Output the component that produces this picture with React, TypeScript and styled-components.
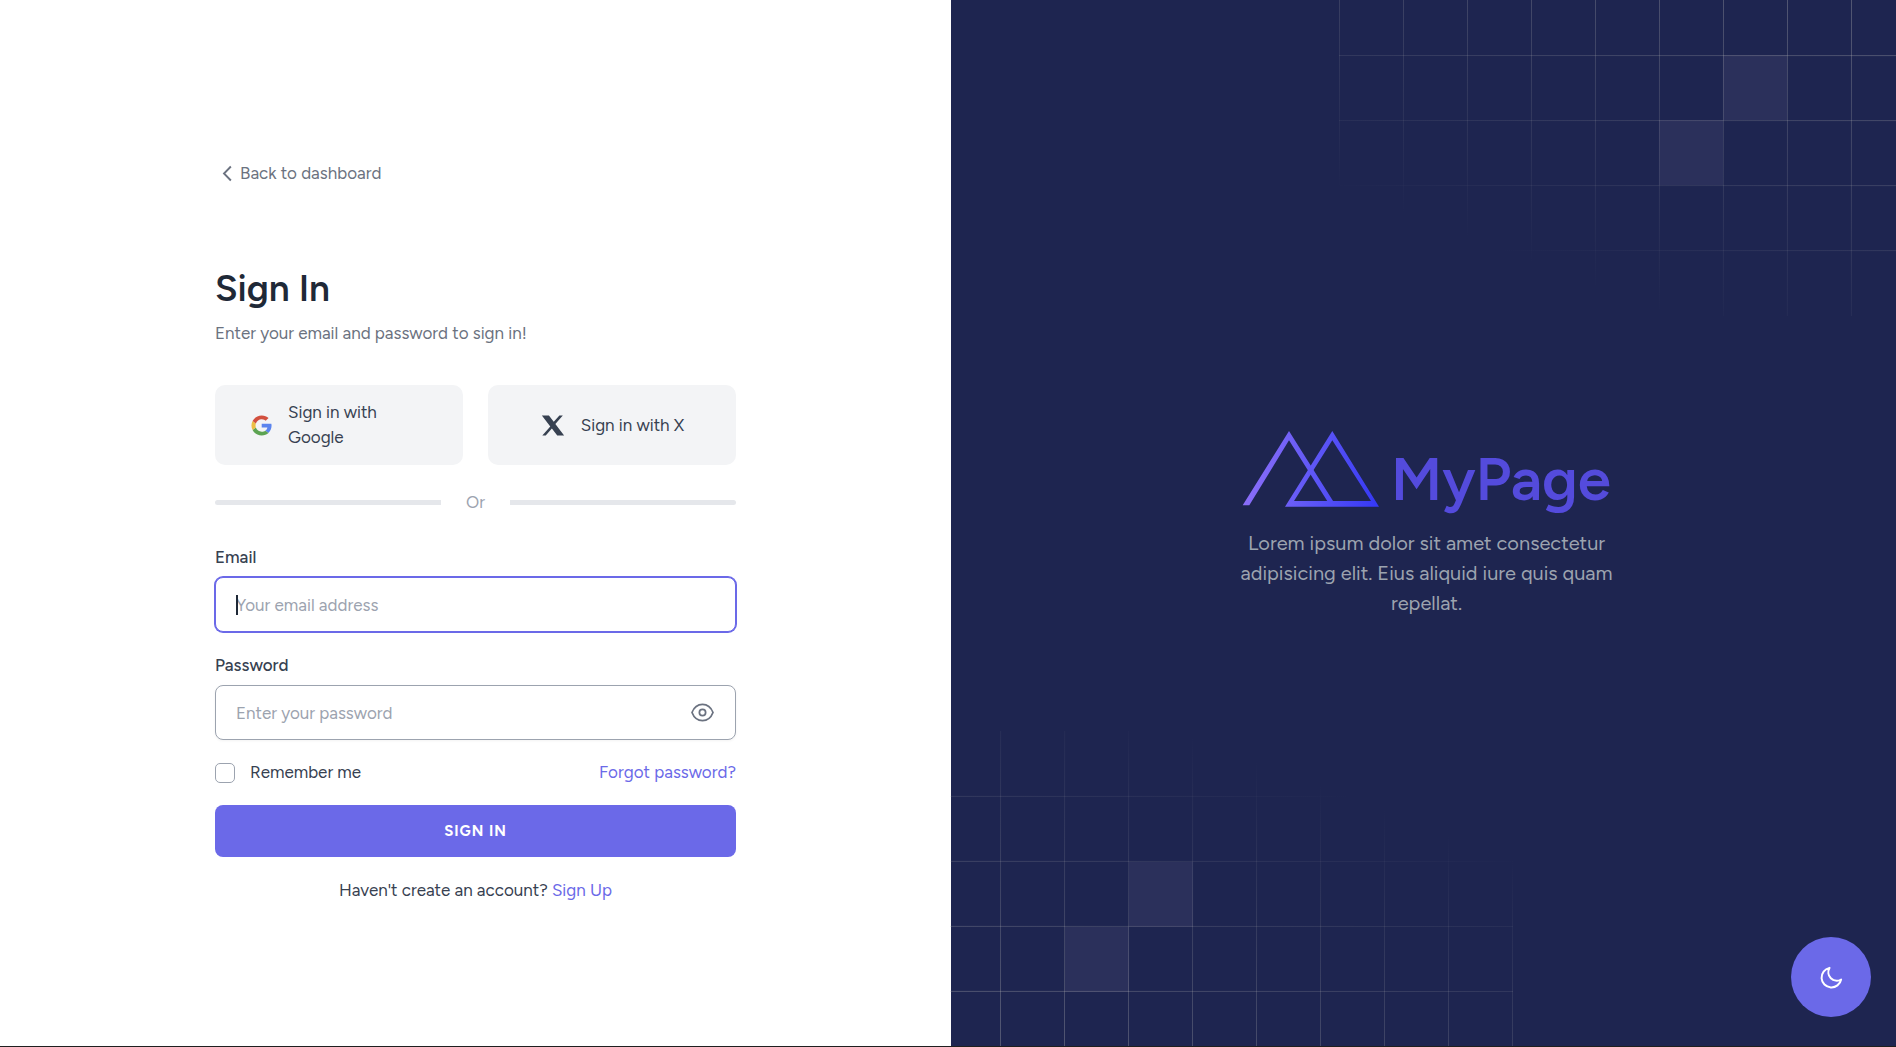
import React from "react";
import styled, { createGlobalStyle } from "styled-components";

const brand = "#6b69e8";

const Global = createGlobalStyle`
  *, *::before, *::after { box-sizing: border-box; }
  body { margin: 0; background: #1f1f1f; font-family: Figtree, Lato, "Open Sans", sans-serif; font-size: 17px; line-height: 25px; color: #374151; }
  h1, p { margin: 0; }
  button, input { font: inherit; color: inherit; }
  a { color: ${brand}; text-decoration: none; }
`;

const Page = styled.main`
  display: flex;
  min-height: calc(100vh - 1px);
  overflow: hidden;
`;

const Panel = styled.section`
  flex: 0 0 calc(50% + 3px);
  display: flex;
  flex-direction: column;
  align-items: center;
`;

const FormPanel = styled(Panel)`
  background: #fff;
  padding: 161px 24px 0;
`;

const BrandPanel = styled(Panel)`
  position: relative;
  justify-content: center;
  background: #1e2550;
`;

const Column = styled.div`
  width: 100%;
  max-width: 521px;
  display: flex;
  flex-direction: column;
`;

const BackLink = styled.a`
  display: flex;
  align-items: center;
  align-self: flex-start;
  color: #6b7280;
  margin-bottom: 74px;
`;

const Title = styled.h1`
  font-size: 37px;
  line-height: 56px;
  font-weight: 600;
  color: #1f2937;
  margin-bottom: 5px;
`;

const Subtitle = styled.p`
  color: #6b7280;
  margin-bottom: 39px;
`;

const SocialRow = styled.div`
  display: grid;
  grid-template-columns: 1fr 1fr;
  gap: 25px;
`;

const SocialButton = styled.button`
  display: flex;
  align-items: center;
  justify-content: center;
  gap: 15px;
  min-height: 80px;
  padding: 15px 35px;
  border: 0;
  border-radius: 10px;
  background: #f3f4f6;
  text-align: left;
  svg { flex: none; }
`;

const Divider = styled.div`
  display: flex;
  align-items: center;
  gap: 25px;
  margin: 25px 0 30px;
  color: #9ca3af;
  &::before, &::after { content: ""; flex: 1; height: 5px; background: #e5e7eb; }
  &::before { border-radius: 3px 0 0 3px; }
  &::after { border-radius: 0 3px 3px 0; }
`;

const Fields = styled.div`
  display: flex;
  flex-direction: column;
  gap: 21px;
  margin-bottom: 20px;
`;

const Field = styled.div`
  display: flex;
  flex-direction: column;
  gap: 7px;
`;

const Label = styled.label`
  font-weight: 500;
`;

const InputWrap = styled.div`
  position: relative;
  display: flex;
`;

const Input = styled.input<{ $trailing?: boolean }>`
  width: 100%;
  height: 55px;
  padding: 0 ${p => (p.$trailing ? 60 : 20)}px 0 20px;
  border: 1px solid #9ca3af;
  border-radius: 8px;
  background: #fff;
  box-shadow: 0 1px 3px rgba(0, 0, 0, 0.05);
  outline: none;
  &::placeholder { color: #9ca3af; opacity: 1; }
  &:focus { border-color: ${brand}; box-shadow: 0 0 0 1px ${brand}; }
`;

const Caret = styled.span`
  display: none;
  position: absolute;
  left: 21px;
  top: 18px;
  width: 2px;
  height: 20px;
  background: #1f2937;
  pointer-events: none;
  input:focus:placeholder-shown + & { display: block; }
`;

const EyeButton = styled.button`
  position: absolute;
  right: 21px;
  top: 0;
  bottom: 0;
  display: flex;
  align-items: center;
  padding: 0;
  border: 0;
  background: none;
  color: #6b7280;
`;

const Options = styled.div`
  display: flex;
  align-items: center;
  justify-content: space-between;
  margin-bottom: 20px;
`;

const Remember = styled.label`
  display: flex;
  align-items: center;
  gap: 15px;
`;

const Checkbox = styled.input`
  appearance: none;
  width: 20px;
  height: 20px;
  margin: 0;
  border: 1px solid #9ca3af;
  border-radius: 5px;
  background: #fff;
  &:checked { background: ${brand}; border-color: ${brand}; }
`;

const Submit = styled.button`
  height: 52px;
  border: 0;
  border-radius: 8px;
  background: ${brand};
  color: #fff;
  font-size: 15px;
  font-weight: 700;
  letter-spacing: 1px;
  text-transform: uppercase;
  margin-bottom: 21px;
`;

const Footnote = styled.p`
  text-align: center;
`;

const GridArt = styled.svg<{ $corner: "top" | "bottom" }>`
  position: absolute;
  width: 563px;
  height: 317px;
  ${p => (p.$corner === "top" ? "top: 0; right: 0;" : "bottom: -1px; left: -1px; transform: rotate(180deg);")}
`;

const Brand = styled.div`
  position: relative;
  width: 400px;
  display: flex;
  flex-direction: column;
  align-items: center;
  padding-top: 2px;
`;

const Logo = styled.div`
  display: flex;
  align-items: flex-start;
  gap: 11px;
  font-size: 60px;
  line-height: 98px;
  font-weight: 600;
  color: #544bdc;
`;

const Tagline = styled.p`
  font-size: 20px;
  line-height: 30px;
  text-align: center;
  color: #9ca3af;
`;

const ThemeToggle = styled.button`
  position: fixed;
  right: 25px;
  bottom: 30px;
  width: 80px;
  height: 80px;
  display: flex;
  align-items: center;
  justify-content: center;
  border: 0;
  border-radius: 50%;
  background: ${brand};
  color: #fff;
`;

function Grid({ corner }: { corner: "top" | "bottom" }) {
  const id = `fade-${corner}`;
  return (
    <GridArt $corner={corner} viewBox="0 0 563 317" aria-hidden="true">
      <defs>
        <linearGradient id={id} gradientUnits="userSpaceOnUse" x1="330" y1="-40" x2="210" y2="270">
          <stop offset="0" stopColor="#b2b2b2" stopOpacity="0.34" />
          <stop offset="1" stopColor="#b2b2b2" stopOpacity="0" />
        </linearGradient>
      </defs>
      <g stroke={`url(#${id})`}>
        {[0, 1, 2, 3, 4, 5, 6, 7, 8].map(i => (
          <path key={i} d={`M${i * 64 + 0.5} 0L${i * 64 + 0.4} 316`} />
        ))}
        {[55.5, 120.5, 185.5, 250.5].map(y => (
          <path key={y} d={`M0 ${y}L563 ${y + 0.1}`} />
        ))}
      </g>
      <path d="M384 55h64v65h-64zM320 120h64v65h-64z" fill="#bcacd0" fillOpacity="0.085" />
    </GridArt>
  );
}

const ChevronIcon = () => (
  <svg width="25" height="25" viewBox="0 0 20 20" fill="none" stroke="currentColor" strokeWidth="1.5" aria-hidden="true">
    <path d="M12.7 4.4 7.200 10l5.500 5.600" />
  </svg>
);

const GoogleIcon = () => (
  <svg width="23" height="23" viewBox="0 0 20 20" aria-hidden="true">
    <path d="M18.75 10.19c0-.72-.06-1.25-.19-1.79h-8.38v3.25h4.92c-.1.81-.63 2.02-1.83 2.84l2.63 2.08c1.78-1.61 2.85-3.98 2.85-6.38z" fill="#5b84ee" />
    <path d="M10.18 18.75c2.41 0 4.43-.78 5.91-2.12l-2.82-2.14c-.75.52-1.77.88-3.09.88-2.36 0-4.36-1.53-5.08-3.63l-2.86 2.17c1.47 2.86 4.47 4.84 7.94 4.84z" fill="#5ca352" />
    <path d="M5.1 11.73A5.41 5.41 0 0 1 4.8 10c0-.6.11-1.19.29-1.73L2.2 6.07A8.8 8.8 0 0 0 1.25 10c0 1.41.34 2.74.95 3.93z" fill="#ecbf45" />
    <path d="M10.18 4.63c1.68 0 2.81.71 3.45 1.3l2.52-2.41C14.6 2.12 12.59 1.25 10.18 1.25 6.71 1.25 3.71 3.2 2.24 6.07l2.88 2.2c.73-2.11 2.7-3.64 5.06-3.64z" fill="#d2503f" />
  </svg>
);

const XIcon = () => (
  <svg width="26" height="25" viewBox="0 0 21 20" fill="currentColor" aria-hidden="true">
    <path d="M15.67 1.88h2.76L12.4 8.76l7.09 9.37h-5.55l-4.35-5.68-4.97 5.68H1.86l6.44-7.36L1.5 1.88h5.69l3.93 5.19z" />
  </svg>
);

const EyeIcon = () => (
  <svg width="25" height="25" viewBox="0 0 20 20" fill="none" stroke="currentColor" strokeWidth="1.4" aria-hidden="true">
    <path d="M1.6 10C3.1 6.1 6.3 3.5 10 3.5s6.900 2.600 8.400 6.500c-1.500 3.900-4.700 6.500-8.400 6.500S3.100 13.900 1.600 10z" />
    <circle cx="10" cy="10" r="2.500" />
  </svg>
);

const MoonIcon = () => (
  <svg width="25" height="25" viewBox="0 0 20 20" fill="none" stroke="currentColor" strokeWidth="1.6" strokeLinejoin="round" aria-hidden="true">
    <path d="M8.400 2.300A7.900 7.900 0 1 0 17.700 11.600 6.800 6.800 0 0 1 8.400 2.300z" />
  </svg>
);

const Mountains = () => (
  <svg width="138" height="78" viewBox="0 0 138 78" fillRule="evenodd" aria-hidden="true">
    <defs>
      <linearGradient id="peaks" gradientUnits="userSpaceOnUse" x1="0" y1="40" x2="138" y2="60">
        <stop offset="0" stopColor="#8f70f8" />
        <stop offset="0.5" stopColor="#5f57f6" />
        <stop offset="1" stopColor="#3538f5" />
      </linearGradient>
    </defs>
    <path fill="url(#peaks)" d="M.7 75.300 47 1l45.300 72H86.500L47 10.300 7.300 75.300z" />
    <path fill="url(#peaks)" d="M43 76.700 90.300 1 137 76.700zM52 71h77L90.300 10.300z" />
  </svg>
);

export default function App() {
  return (
    <>
      <Global />
      <Page>
        <FormPanel>
          <Column>
            <BackLink href="#">
              <ChevronIcon />
              Back to dashboard
            </BackLink>
            <Title>Sign In</Title>
            <Subtitle>Enter your email and password to sign in!</Subtitle>
            <SocialRow>
              <SocialButton type="button"><GoogleIcon /><span>Sign in with Google</span></SocialButton>
              <SocialButton type="button"><XIcon /><span>Sign in with X</span></SocialButton>
            </SocialRow>
            <Divider>Or</Divider>
            <Fields>
              <Field>
                <Label htmlFor="email">Email</Label>
                <InputWrap>
                  <Input id="email" type="email" placeholder="Your email address" autoFocus />
                  <Caret />
                </InputWrap>
              </Field>
              <Field>
                <Label htmlFor="password">Password</Label>
                <InputWrap>
                  <Input id="password" type="password" placeholder="Enter your password" $trailing />
                  <EyeButton type="button" aria-label="Show password"><EyeIcon /></EyeButton>
                </InputWrap>
              </Field>
            </Fields>
            <Options>
              <Remember><Checkbox type="checkbox" />Remember me</Remember>
              <a href="#">Forgot password?</a>
            </Options>
            <Submit type="button">Sign in</Submit>
            <Footnote>Haven't create an account? <a href="#">Sign Up</a></Footnote>
          </Column>
        </FormPanel>
        <BrandPanel>
          <Grid corner="top" />
          <Grid corner="bottom" />
          <Brand>
            <Logo><Mountains />MyPage</Logo>
            <Tagline>Lorem ipsum dolor sit amet consectetur adipisicing elit. Eius aliquid iure quis quam repellat.</Tagline>
          </Brand>
        </BrandPanel>
      </Page>
      <ThemeToggle type="button" aria-label="Toggle dark mode"><MoonIcon /></ThemeToggle>
    </>
  );
}
